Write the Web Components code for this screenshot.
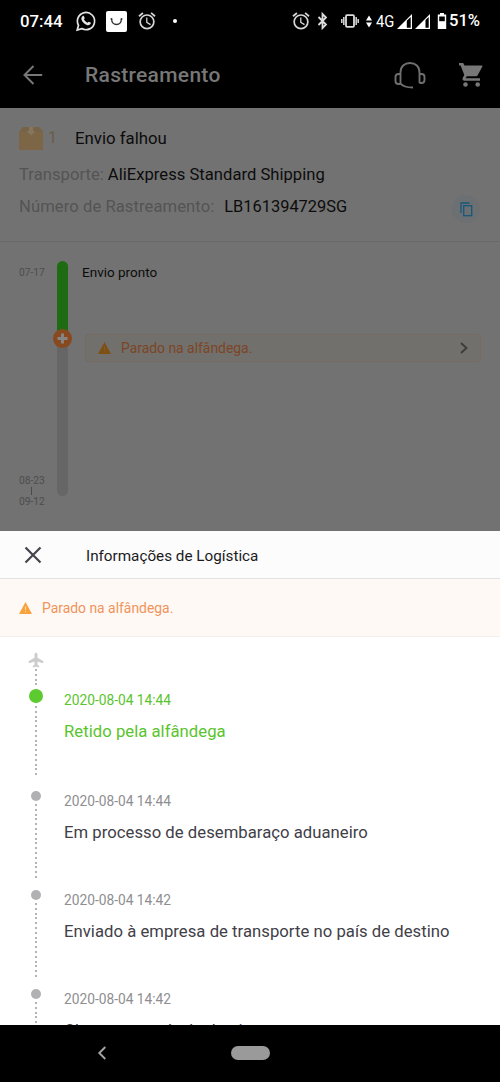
<!DOCTYPE html>
<html lang="pt-BR">
<head>
<meta charset="utf-8">
<title>Rastreamento</title>
<style>
html,body{margin:0;height:100%;background:#000}
body{font-family:Roboto,"Noto Sans",sans-serif;overflow:hidden}
</style>
</head>
<body>
<tracking-screen></tracking-screen>
<script>
const define = (name, html, setup) => customElements.define(name, class extends HTMLElement {
  connectedCallback() {
    if (this.shadowRoot) return;
    const root = this.attachShadow({ mode: 'open' });
    const t = document.createElement('template');
    t.innerHTML = '<style>*{box-sizing:border-box}svg{display:block;overflow:visible;flex:none}</style>' + html;
    root.append(t.content.cloneNode(true));
    if (setup) setup(this, root);
  }
});

/* One line of text: size, line height and tracking come from attributes. */
define('text-line', `<style>:host{display:block;white-space:nowrap;flex:none}</style><slot></slot>`, host => {
  host.style.fontSize = host.getAttribute('size') + 'px';
  host.style.lineHeight = (host.getAttribute('lh') || 20) + 'px';
  if (host.hasAttribute('track')) host.style.letterSpacing = host.getAttribute('track') + 'px';
});

const alarm = `<svg width="18" height="18" viewBox="1.500 1.500 21 21" fill="#d6d6d6"><path d="M22 5.700l-4.600-3.900-1.300 1.500 4.600 3.900L22 5.700zM7.900 3.400L6.600 1.900 2 5.700l1.300 1.500 4.600-3.800zM12.500 8H11v6l4.700 2.900.8-1.300-4-2.300V8zM12 4a9 9 0 1 0 0 18 9 9 0 0 0 0-18zm0 16a7 7 0 1 1 0-14 7 7 0 0 1 0 14z"/></svg>`;

define('status-bar', `<style>
:host{display:flex;align-items:center;height:42px;padding:0 20px 0 20px;color:#fff}
.l,.r{display:flex;align-items:center}.r{margin-left:auto}
.tile{width:21px;height:21px;border-radius:2px;background:#fff;margin-left:10px}
.dot{width:4px;height:4px;border-radius:50%;background:#fff;margin-left:17px}
text-line{font-weight:500}
</style>
<div class="l"><text-line size="16.800">07:44</text-line>
<svg style="margin-left:13px" width="20" height="20" viewBox="0 0 20 20"><path d="M1.200 19 2.500 14.300A8.600 8.600 0 1 1 5.800 17.600Z" fill="none" stroke="#e6e6e6" stroke-width="1.700"/><path d="M6.500 5.200c.5-.5 1.200-.4 1.400.1l.8 1.700c.1.4-.7 1-.8 1.300.7 1.500 2 2.700 3.600 3.400.4-.1.900-1.100 1.300-1l1.800.900c.4.200.2 1-.1 1.500-.8 1.200-2.200 1.400-3.700.8C8 13 5.900 10.700 5.400 8.300 5.200 7.100 5.700 5.900 6.500 5.200Z" fill="#e6e6e6"/></svg>
<div class="tile"><svg width="21" height="21" viewBox="0 0 21 21"><path d="M5.500 8c.6 7.300 9.400 7.300 10 0" fill="none" stroke="#333" stroke-width="1.300"/><circle cx="5.500" cy="8" r="1" fill="#333"/><circle cx="15.500" cy="8" r="1" fill="#333"/></svg></div>
<div style="margin-left:11px">${alarm}</div><div class="dot"></div></div>
<div class="r"><div>${alarm}</div>
<svg style="margin-left:7px" width="12" height="16" viewBox="0 0 12 16"><path d="M1.500 4l7.500 7.500L5.500 15V1L9 4.500 1.500 12" fill="none" stroke="#ddd" stroke-width="1.800"/></svg>
<svg style="margin-left:12px" width="18" height="14" viewBox="0 0 18 14"><rect x="5" y="1.200" width="8" height="11.600" rx="1" fill="none" stroke="#ddd" stroke-width="1.800"/><path d="M2.800 3v8M15.200 3v8M.8 5v4M17.200 5v4" stroke="#ccc" stroke-width="1.600"/></svg>
<svg style="margin-left:7px" width="6" height="13" viewBox="0 0 6 13" fill="#fff"><path d="M0 5.500 3 .5l3 5zM0 7.500l3 5 3-5z"/></svg>
<text-line size="17" style="font-weight:400;margin-left:4px;transform:scaleX(.87);transform-origin:0 50%;width:21px">4G</text-line>
<svg width="34" height="15" viewBox="0 0 34 15"><path d="M0 15 15 0v15z" fill="#fff"/><path d="M9.800 6.800 13.700 3v10.700H9.800z" fill="#000"/><path d="M18 15 33 0v15z" fill="#fff"/><path d="M28.500 6 31.700 3v10.700h-3.200z" fill="#000"/></svg>
<svg style="margin-left:6px" width="10" height="16" viewBox="0 0 10 16"><path d="M3 0h4v1.500h2.200V16H.8V1.500H3z" fill="#fff"/><path d="M2.200 3.500h5.600V8.200H2.200z" fill="#000"/></svg>
<text-line size="16.600" style="margin-left:2px;width:31px">51%</text-line></div>`);

define('app-bar', `<style>
:host{display:flex;align-items:center;height:66px;padding:0 16px 0 23px;color:#777}
text-line{font-weight:500;margin-left:42px}
.head{margin-left:auto;margin-right:32px}
</style>
<svg width="20" height="20" viewBox="0 0 20 20"><path d="M19.200 10H2M10.500 1 1.500 10l9 9" fill="none" stroke="#777" stroke-width="2"/></svg>
<text-line size="21" lh="24" track="0.300"><slot></slot></text-line>
<svg class="head" width="32" height="28" viewBox="0 0 32 28" fill="none" stroke="#6f6f6f" stroke-width="1.900"><path d="M6.500 23V11.500C6.500 5.500 10.500 2 16 2s9.500 3.500 9.500 9.500V22M6.500 13H4.500Q1.500 13 1.500 16v4q0 3 3 3h2M25.500 13h2q3 0 3 3v3q0 3-3 3h-2M6.500 22.500q3 4 12.500 4"/></svg>
<svg width="26" height="26" viewBox="0 0 26 26" fill="#777"><path d="M1 1h4.200l1.300 2.600H24q.8.200.4 1L19.800 13q-.6 1.200-1.900 1.200H8.800l-1.100 2.100H22v2.400H6.600c-1.800 0-2.600-1.500-1.800-2.900l1.500-2.900L2.600 3.400H1z"/><circle cx="7.500" cy="22.500" r="2.300"/><circle cx="19.700" cy="22.500" r="2.300"/></svg>`);

define('shipment-summary', `<style>
:host{display:block;height:134px;padding:20px 20px 0 19px;border-bottom:1px solid #696969;color:#0c0c0c}
.row{display:flex;align-items:center;height:20px}
.k{color:#545454}
.copy{width:28px;height:28px;border-radius:50%;background:#6c7073;margin:4px 0 0 auto;display:grid;place-items:center}
</style>
<div class="row"><svg width="24" height="23" viewBox="0 0 24 23"><path d="M4 0h16l4 5v17q0 1-1 1H1q-1 0-1-1V5z" fill="#7d6645"/><path d="M4 0h16l4 5H0z" fill="#776346"/><path d="M10 0h4v4h2.500L12 8.500 7.500 4H10z" fill="#86765f"/></svg>
<text-line size="16" style="color:#6b5c4a;margin-left:5px;width:27px">1</text-line><text-line size="16.800">Envio falhou</text-line></div>
<div class="row" style="margin-top:17px"><text-line class="k" size="16.600" track="0.040">Transporte:</text-line><text-line size="16.600" track="0.020" style="margin-left:4px">AliExpress Standard Shipping</text-line></div>
<div class="row" style="margin-top:12px"><text-line class="k" size="16.600" track="0.080">Número de Rastreamento:</text-line><text-line size="16.400" style="margin-left:10px">LB161394729SG</text-line>
<div class="copy"><svg width="13" height="15" viewBox="0 0 13 15" fill="none" stroke="#17577a" stroke-width="1.300"><path d="M1 11V1h8.500"/><rect x="3.700" y="3.700" width="8" height="10"/></svg></div></div>`);

define('delay-notice', `<style>
:host{display:flex;align-items:center;color:#f0945a}
.chev{margin-left:auto}
:host(:not([link])) .chev{display:none}
:host([link]){height:28px;border:1px solid #756b61;border-radius:3px;background:#72706c;padding:0 12px;color:#7c4526}
:host(:not([link])){height:58px;padding:0 19px;background:#fff9f5;border-bottom:1px solid #f3efec}
</style>
<svg class="w" width="13" height="12" viewBox="0 0 13 12"><path d="M6.500 0 13 12H0z" fill="var(--warn,#f9a23c)"/><path d="M6.500 4.500v3.500M6.500 9v1.200" stroke="var(--mark,#fddcae)" stroke-width="1"/></svg>
<text-line size="13.900" style="margin-left:10px"><slot></slot></text-line>
<svg class="chev" width="8" height="12" viewBox="0 0 8 12"><path d="M1 1l5.500 5L1 11" fill="none" stroke="#3c3b3a" stroke-width="1.800"/></svg>`);

define('delivery-progress', `<style>
:host{display:grid;grid-template-columns:57px 11px 1fr;height:289px;padding-top:19px;color:#0c0c0c}
.dates{display:flex;flex-direction:column;justify-content:space-between;padding-left:19px;color:#4d4d4d;height:248px}
.range{width:26px}
.tick{width:1px;height:8px;background:#4a4a4a;margin:-1px 0 0 12px}
.bar{position:relative;height:235px;border-radius:6px;background:linear-gradient(#1f6b14 0 77px,#666 77px)}
.stop{position:absolute;left:-4px;top:68px}
.info{padding:0 19px 0 14px}
delay-notice{margin:51px 0 0 3px;--warn:#7f5013;--mark:#795d38}
</style>
<div class="dates"><text-line size="10.200" lh="24">07-17</text-line><div class="range"><text-line size="10.200" lh="14">08-23</text-line><div class="tick"></div><text-line size="10.200" lh="14">09-12</text-line></div></div>
<div class="bar"><svg class="stop" width="19" height="19" viewBox="0 0 19 19"><circle cx="9.500" cy="9.500" r="9.500" fill="#89491f"/><path d="M9.500 4.500v10M4.500 9.500h10" stroke="#858585" stroke-width="3"/></svg></div>
<div class="info"><text-line size="13.500" lh="22">Envio pronto</text-line><delay-notice link>Parado na alfândega.</delay-notice></div>`);

define('sheet-header', `<style>
:host{display:flex;align-items:center;height:48px;padding-left:24px;background:#fcfcfd;border-bottom:1px solid #e2e2e4;color:#1b1b1d}
</style>
<svg width="18" height="18" viewBox="0 0 18 18"><path d="M1.500 1.500l15 15M16.500 1.500l-15 15" stroke="#44444c" stroke-width="2.200"/></svg>
<text-line size="15.250" style="margin-left:44px;padding-top:3px"><slot></slot></text-line>`);

define('track-event', `<style>
:host{display:grid;grid-template-columns:64px 1fr;height:99px;color:#3f4048;--dot:#b1b1b3;--date:#8e8e91}
:host([current]){color:#5ac42e;--dot:#5bcb2f;--date:#5ac42e;height:102px}
.rail{display:flex;flex-direction:column;align-items:center;width:72px}
.dot{width:10px;height:10px;border-radius:50%;background:var(--dot);flex:none}
:host([current]) .dot{width:14px;height:14px}
.dash{width:2px;flex:1;margin:3px 0 9px 0;background:repeating-linear-gradient(#b4b4b4 0 2px,transparent 2px 4.800px)}
:host([current]) .dash{margin-bottom:13px}
:host([current]) .body{padding-top:1px}
.date{color:var(--date)}
</style>
<div class="rail"><div class="dot"></div><div class="dash"></div></div>
<div class="body"><text-line class="date" size="13.750"></text-line><text-line size="16.680" track="0.030" style="margin-top:12px"><slot></slot></text-line></div>`, (host, root) => {
  root.querySelector('.date').textContent = host.getAttribute('date');
});

define('event-list', `<style>
:host{display:block;height:388px;background:#fff;overflow:hidden}
.start{width:72px;height:52px;padding-top:16px;display:flex;flex-direction:column;align-items:center}
.dash{width:2px;height:17px;margin:2px 0 0 0;background:repeating-linear-gradient(#b4b4b4 0 2px,transparent 2px 4.800px)}
</style>
<div class="start"><svg width="14" height="14" viewBox="2 2 20 20"><path d="M22 16v-2l-8.500-5V3.500a1.500 1.500 0 0 0-3 0V9L2 14v2l8.500-2.500V19L8 20.500V22l4-1 4 1v-1.500L13.500 19v-5.500z" fill="#ccc" stroke="#ccc" stroke-width="1.200"/></svg><div class="dash"></div></div>
<slot></slot>`);

define('nav-bar', `<style>
:host{display:grid;grid-template-columns:204px 92px 204px;align-items:center;justify-items:center;height:57px;padding-bottom:1px;background:#000}
.pill{width:39px;height:14px;border-radius:7px;background:#9a9a9a}
</style>
<svg width="8" height="14" viewBox="0 0 8 14"><path d="M7.300 1 1.300 7l6 6" fill="none" stroke="#a5a5a5" stroke-width="1.900"/></svg><div class="pill"></div>`);

define('tracking-screen', `<style>
:host{display:flex;flex-direction:column;width:500px;height:1082px;background:#000;overflow:hidden}
.page{background:#727272}
</style>
<status-bar></status-bar><app-bar>Rastreamento</app-bar>
<div class="page"><shipment-summary></shipment-summary><delivery-progress></delivery-progress></div>
<sheet-header>Informações de Logística</sheet-header>
<delay-notice>Parado na alfândega.</delay-notice>
<event-list>
<track-event current date="2020-08-04 14:44">Retido pela alfândega</track-event>
<track-event date="2020-08-04 14:44">Em processo de desembaraço aduaneiro</track-event>
<track-event date="2020-08-04 14:42">Enviado à empresa de transporte no país de destino</track-event>
<track-event date="2020-08-04 14:42">Chegou no país de destino</track-event>
</event-list>
<nav-bar></nav-bar>`);
</script>
</body>
</html>
